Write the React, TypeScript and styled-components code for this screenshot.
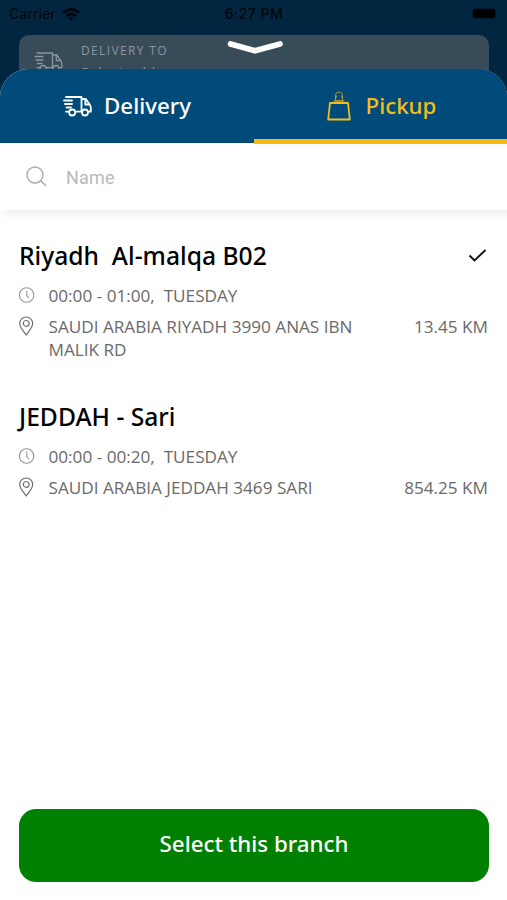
import React from "react";
import styled, { createGlobalStyle } from "styled-components";

const GlobalStyle = createGlobalStyle`
  * { box-sizing: border-box; }
  body { margin: 0; background: #fff; font-family: "Open Sans", "Noto Sans", sans-serif; }
  svg { display: block; flex: none; }
`;

const Screen = styled.div`
  position: relative;
  width: 507px;
  height: 900px;
  overflow: hidden;
  background: #02263f;
`;

const StatusBar = styled.header`
  display: grid;
  grid-template-columns: 1fr auto 1fr;
  align-items: center;
  height: 35px;
  padding: 0 10px 7px 9px;
  color: #00060c;
  font: 400 14px/20px Inter, sans-serif;
`;

const Carrier = styled.div`
  display: flex;
  align-items: center;
  gap: 6px;
  letter-spacing: 0.15px;
`;

const Clock = styled.time`
  padding-left: 2px;
  font-weight: 500;
  letter-spacing: 0.45px;
`;

const Battery = styled.div`
  justify-self: end;
  width: 22px;
  height: 9px;
  margin: -2px 2px 0 0;
  border-radius: 2px;
  background: #000;
  box-shadow: 0 0 2px #000;
`;

const AddressCard = styled.div`
  display: flex;
  gap: 18px;
  height: 66px;
  margin: 0 18px 0 19px;
  padding: 6px 15px;
  border-radius: 10px;
  background: #374b59;
  color: #8b969e;
`;

const AddressIcon = styled.div`
  padding-top: 10px;
`;

const AddressLabel = styled.div`
  font-size: 12px;
  line-height: 19px;
  letter-spacing: 1.35px;
`;

const AddressValue = styled.div`
  margin-top: 3px;
  font-size: 14px;
  line-height: 20px;
  letter-spacing: 0.8px;
`;

const Handle = styled.button`
  position: absolute;
  top: 38px;
  left: 226px;
  padding: 0;
  border: 0;
  background: none;
`;

const Sheet = styled.main`
  position: absolute;
  inset: 69px 0 0;
  display: flex;
  flex-direction: column;
  overflow: hidden;
  border-radius: 28px 28px 0 0;
  background: #fff;
`;

const Tabs = styled.nav`
  display: grid;
  grid-template-columns: 254px 253px;
  flex: none;
  height: 74px;
  background: #004b7a;
`;

const Tab = styled.button<{ $active?: boolean }>`
  display: flex;
  align-items: center;
  justify-content: center;
  gap: ${(p) => (p.$active ? 15 : 12)}px;
  height: 75px;
  padding: ${(p) => (p.$active ? "4px 0 0 2px" : "2px 0 4px")};
  border: 0;
  border-bottom: ${(p) => (p.$active ? "5px solid #f8b912" : "0")};
  background: ${(p) => (p.$active ? "#004b7a" : "none")};
  color: ${(p) => (p.$active ? "#f4bd1c" : "#fff")};
  font: 500 22.3px/30px "Noto Sans", sans-serif;
`;

const Search = styled.label`
  display: flex;
  align-items: center;
  flex: none;
  gap: 19px;
  height: 67px;
  padding: 0 26px;
  color: #aaa;
  box-shadow: 4px 4px 8px rgba(0, 0, 0, 0.08);
`;

const SearchInput = styled.input`
  flex: 1;
  min-width: 0;
  padding: 2px 0 0;
  border: 0;
  outline: 0;
  background: none;
  font: 400 18px/24px Roboto, sans-serif;
  letter-spacing: 0.2px;
  &::placeholder { color: #b9b9b9; opacity: 1; }
`;

const BranchList = styled.section`
  flex: 1;
  padding: 27px 19px 0;
`;

const Branch = styled.article`
  margin-bottom: 37px;
`;

const BranchHeader = styled.div`
  display: flex;
  align-items: center;
  justify-content: space-between;
  height: 38px;
`;

const BranchName = styled.h2`
  margin: 0;
  color: #000;
  font-family: "Noto Sans", sans-serif;
  font-size: 24.65px;
  font-weight: 500;
  line-height: 38px;
  white-space: pre;
`;

const Detail = styled.div<{ $top: number }>`
  display: grid;
  grid-template-columns: 29.5px 310px 1fr;
  margin-top: ${(p) => p.$top}px;
  color: #6a6a6a;
  font-size: 17.15px;
  line-height: 23px;
`;

const DetailIcon = styled.div`
  display: flex;
  align-items: center;
  width: 16px;
  height: 21px;
`;

const DetailText = styled.div`
  white-space: pre-wrap;
`;

const Distance = styled.div`
  text-align: right;
  white-space: nowrap;
`;

const Footer = styled.footer`
  padding: 0 18px 18.5px 19px;
`;

const SelectButton = styled.button`
  display: block;
  width: 100%;
  height: 73px;
  padding: 0 0 3px;
  border: 0;
  border-radius: 17px;
  background: #008000;
  color: #fff;
  font: 500 22.3px/30px "Noto Sans", sans-serif;
`;

const Truck = ({ width = 29, strokeWidth = 1.6 }) => (
  <svg width={width} height={width * 22 / 29} viewBox="0 0 29 22" fill="none" stroke="currentColor" strokeWidth={strokeWidth} strokeLinecap="round" strokeLinejoin="round">
    <path d="M3 2h15.5v14.7M1 5.5h8M2 9h7M3.5 12.5H8M3 16.7h3M12.5 16.7h6.2M18.5 4h4.3l3.9 5.5 1.1 2.5v4.7h-2.3M22.3 4.5v5h4.2" />
    <circle cx="9.2" cy="17.5" r="3" />
    <circle cx="22" cy="17.5" r="3" />
  </svg>
);

const Bag = () => (
  <svg width="24" height="30" viewBox="0 0 24 30" fill="none" stroke="currentColor" strokeWidth="1.8" strokeLinejoin="round">
    <path d="M3 12h18L22.8 28.5H1.2Z" />
    <g strokeWidth="1" opacity="0.65">
      <path d="M8.5 7.5V4.2Q8.5 1 12 1t3.5 3.2v3.3M9.7 4.5l-1.9 5h8.4l-1.9-5M6.5 10.3h11" />
    </g>
  </svg>
);

const ClockIcon = () => (
  <svg width="16" height="16" viewBox="0 0 16 16" fill="none" stroke="#929292" strokeWidth="1.1">
    <circle cx="7.6" cy="8" r="7.2" />
    <path d="M7.8 3.8v4.7l2 2.8" />
  </svg>
);

const PinIcon = () => (
  <svg width="16" height="20" viewBox="0 0 16 20" fill="none" stroke="#707070" strokeWidth="1.2">
    <path d="M7.2 18.8C4.9 15.5.7 11.6.7 7.5a6.5 6.5 0 0 1 13 0c0 4.1-4.2 8-6.5 11.3Z" />
    <circle cx="7.2" cy="7.4" r="2.9" />
  </svg>
);

const Wifi = () => (
  <svg width="18" height="13" viewBox="0 0 18 13" fill="none" stroke="currentColor" strokeWidth="2.7">
    <path d="M1 4.7Q9-2 17 4.7M4 8Q9 3.6 14 8" />
    <path d="M6.3 9.6Q9 7.8 11.7 9.6L9 12.5Z" fill="currentColor" stroke="none" />
  </svg>
);

const branches = [
  { name: "Riyadh  Al-malqa B02", hours: "00:00 - 01:00,  TUESDAY", address: "SAUDI ARABIA RIYADH 3990 ANAS IBN MALIK RD", distance: "13.45 KM", selected: true },
  { name: "JEDDAH - Sari", hours: "00:00 - 00:20,  TUESDAY", address: "SAUDI ARABIA JEDDAH 3469 SARI", distance: "854.25 KM", selected: false },
];

export default function App() {
  return (
    <Screen>
      <GlobalStyle />
      <StatusBar>
        <Carrier>Carrier <Wifi /></Carrier>
        <Clock>6:27 PM</Clock>
        <Battery />
      </StatusBar>
      <AddressCard>
        <AddressIcon><Truck strokeWidth={1.3} /></AddressIcon>
        <div>
          <AddressLabel>DELIVERY TO</AddressLabel>
          <AddressValue>Select address</AddressValue>
        </div>
      </AddressCard>
      <Handle aria-label="Close">
        <svg width="58" height="18" viewBox="0 0 58 18" fill="none" stroke="#fff" strokeWidth="5.7" strokeLinecap="round" strokeLinejoin="round">
          <path d="M4.5 6 29 12.8 54 6" />
        </svg>
      </Handle>
      <Sheet>
        <Tabs>
          <Tab><Truck strokeWidth={1.8} />Delivery</Tab>
          <Tab $active><Bag />Pickup</Tab>
        </Tabs>
        <Search>
          <svg width="21" height="21" viewBox="0 0 21 21" fill="none" stroke="currentColor" strokeWidth="1.4" strokeLinecap="round">
            <circle cx="9" cy="9" r="8" />
            <path d="m14.8 14.8 5 5" />
          </svg>
          <SearchInput placeholder="Name" />
        </Search>
        <BranchList>
          {branches.map((b) => (
            <Branch key={b.name}>
              <BranchHeader>
                <BranchName>{b.name}</BranchName>
                {b.selected && (
                  <svg width="20" height="17" viewBox="0 0 20 17" fill="none" stroke="#111" strokeWidth="1.9">
                    <path d="m1.5 7.5 5 5L17.5 2" />
                  </svg>
                )}
              </BranchHeader>
              <Detail $top={9}>
                <DetailIcon><ClockIcon /></DetailIcon>
                <DetailText>{b.hours}</DetailText>
              </Detail>
              <Detail $top={8}>
                <DetailIcon><PinIcon /></DetailIcon>
                <DetailText>{b.address}</DetailText>
                <Distance>{b.distance}</Distance>
              </Detail>
            </Branch>
          ))}
        </BranchList>
        <Footer><SelectButton>Select this branch</SelectButton></Footer>
      </Sheet>
    </Screen>
  );
}
